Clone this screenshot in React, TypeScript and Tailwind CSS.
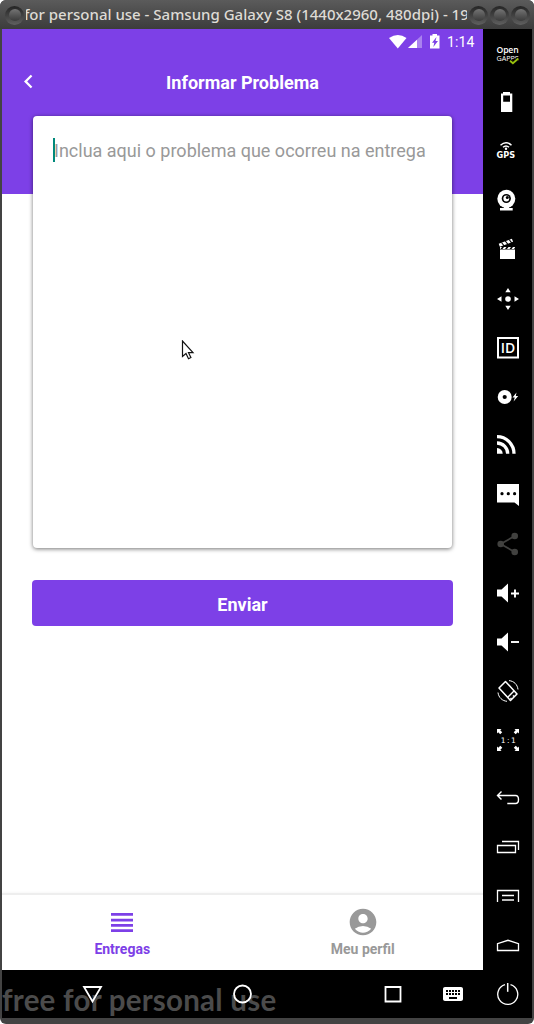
import React from "react";
import { MdAccountCircle, MdChevronLeft, MdKeyboard } from "react-icons/md";

function Cell({ children, label }: { children: React.ReactNode; label: string }) {
  return (
    <button aria-label={label} className="block h-[49px] w-[49px]">
      <svg width="49" height="49" viewBox="0 0 49 49" fill="#fff">
        {children}
      </svg>
    </button>
  );
}

const speaker = <path d="M14 21.5h4.500L25 15.500v19l-6.500-6H14z" />;

function Toolbar() {
  return (
    <aside className="flex w-[49px] shrink-0 flex-col justify-between bg-black">
      <div className="flex flex-col">
        <Cell label="Open GApps">
          <text x="13.600" y="23.600" fontSize="8.600" fontWeight="600" fontFamily="Open Sans, sans-serif" textLength="22">Open</text>
          <text x="13.600" y="32.200" fontSize="7.200" fontWeight="500" fontFamily="Open Sans, sans-serif" textLength="22">GAPPS</text>
          <path d="M27 31.700l2.900 2.600 5.400-4.800" fill="none" stroke="#000" strokeWidth="3.400" />
          <path d="M27 31.700l2.900 2.600 5.400-4.800" fill="none" stroke="#97bf0d" strokeWidth="1.900" />
        </Cell>
        <Cell label="Battery">
          <path fillRule="evenodd" d="M20 14h7v1.500h2.300V34H18V15.500H20zM20.200 17.500v6.300h6.800v-6.300z" />
        </Cell>
        <Cell label="GPS">
          <circle cx="23" cy="21.800" r="1.200" />
          <path d="M20 20.300q3-2.600 6 0M17.500 18.200q5.500-4.800 11 0" fill="none" stroke="#fff" strokeWidth="1.500" />
          <text x="13.600" y="31.400" fontSize="8" fontWeight="700" fontFamily="DejaVu Sans, sans-serif" textLength="18.600" lengthAdjust="spacingAndGlyphs">GPS</text>
        </Cell>
        <Cell label="Camera">
          <circle cx="23.300" cy="22.800" r="9" />
          <circle cx="23.300" cy="22.500" r="4.600" fill="#000" />
          <circle cx="23.300" cy="22.500" r="2.900" />
          <circle cx="24.300" cy="21.500" r="1.500" fill="#000" />
          <path d="M21 31h5v1h3.700v2.500H17V32h4z" />
        </Cell>
        <Cell label="Video">
          <path d="M17 24.500h15V34H17zM17 22h2l-1.500 2H17zM21 22h2.500L22 24h-2.500zM25.500 22H28l-1.500 2H24zM30 22h2v.5L31 24h-2.500z" />
          <path d="M16.300 20.300l13.200-5" stroke="#fff" strokeWidth="3.200" fill="none" />
          <path d="M18.500 17.500l2.600 3.300M22.300 16l2.600 3.300M26.100 14.500l2.600 3.300" stroke="#000" strokeWidth="1.100" />
        </Cell>
        <Cell label="Move">
          <circle cx="25" cy="25" r="2.800" />
          <path d="M25 14l2.700 4.300h-5.400zM25 36l2.700-4.300h-5.400zM14 25l4.500-2.700v5.400zM36 25l-4.500-2.700v5.400z" />
        </Cell>
        <Cell label="Identifiers">
          <rect x="15" y="15" width="20" height="19.500" fill="none" stroke="#fff" strokeWidth="2" />
          <text x="17.800" y="30" fontSize="14" fontWeight="600" fontFamily="Open Sans, sans-serif" textLength="14.500" lengthAdjust="spacingAndGlyphs">ID</text>
        </Cell>
        <Cell label="Disk">
          <circle cx="21.700" cy="25" r="7" />
          <circle cx="21.700" cy="25" r="2.100" fill="#000" />
          <path d="M33.500 20.500l-4 5h2.300l-1.200 4 4.600-5.500h-2.400z" />
        </Cell>
        <Cell label="Network">
          <path d="M14 27a5.700 5.700 0 0 1 5.700 5.700H14z" />
          <path d="M14 22a10.700 10.700 0 0 1 10.700 10.700M14 15.700a17 17 0 0 1 17 17" fill="none" stroke="#fff" strokeWidth="3.300" />
        </Cell>
        <Cell label="Messages">
          <path d="M14 14h22v22l-4.500-3.500H14z" />
          <g fill="#000">
            <circle cx="19" cy="23.700" r="1.600" />
            <circle cx="25.300" cy="23.700" r="1.600" />
            <circle cx="31.600" cy="23.700" r="1.600" />
          </g>
        </Cell>
        <Cell label="Share">
          <path d="M31.700 17l-14 8 14 8" fill="none" stroke="#41413f" strokeWidth="1.800" />
          <g fill="#41413f">
            <circle cx="17.700" cy="25" r="3.300" />
            <circle cx="31.700" cy="17" r="3.300" />
            <circle cx="31.700" cy="33" r="3.300" />
          </g>
        </Cell>
        <Cell label="Volume up">
          {speaker}
          <path d="M28 25.500h8M32 21.500v8" stroke="#fff" strokeWidth="1.900" />
        </Cell>
        <Cell label="Volume down">
          {speaker}
          <path d="M28 25h8" stroke="#fff" strokeWidth="1.900" />
        </Cell>
        <Cell label="Rotate">
          <g fill="none" stroke="#fff">
            <path d="M22.500 15.500L34 28l-6.500 6.500L16 22z" strokeWidth="1.500" strokeLinejoin="round" />
            <path d="M24.500 31.500l6.500-6.500" strokeWidth="1.300" />
            <path d="M26 14.600c5 .5 8.500 4 9 8.900M15 26.500c.5 5 4.500 8.500 9 8.800" strokeWidth="1" />
            <path d="M27.500 32l1 1M30 29.500l1 1" strokeWidth="1.500" />
          </g>
        </Cell>
        <Cell label="Pixel perfect">
          <path d="M14 14h4.500l-1.300 1.300 2 2-2 2-2-2L14 18.500zM36 14v4.500l-1.300-1.300-2 2-2-2 2-2L31.500 14zM14 36v-4.500l1.300 1.300 2-2 2 2-2 2 1.300 1.200zM36 36h-4.500l1.300-1.300-2-2 2-2 2 2 1.200-1.200z" />
          <text x="17.800" y="28" fontSize="7.500" fontFamily="DejaVu Sans, sans-serif" textLength="15">1:1</text>
        </Cell>
      </div>
      <div className="flex flex-col">
        <Cell label="Back">
          <path d="M14.500 22.500h18c4 0 4 8 0 8h-8.200M18.500 18.500l-4 4 4 4" fill="none" stroke="#fff" strokeWidth="1.400" />
        </Cell>
        <Cell label="Recent">
          <path d="M14.500 23.500h18v7h-18zM19 19.500h16.500v8.500" fill="none" stroke="#fff" strokeWidth="1.300" />
        </Cell>
        <Cell label="Menu">
          <path d="M14.500 31V19.500h21V31M19 24.500h12" fill="none" stroke="#fff" strokeWidth="1.300" />
          <path d="M19 29h12" stroke="#bbb" strokeWidth="2" />
        </Cell>
        <Cell label="Home">
          <path d="M14.500 30.500v-6.800L25 20.300l10.500 3.400v6.800z" fill="none" stroke="#fff" strokeWidth="1.300" />
        </Cell>
        <Cell label="Power">
          <path d="M22 15.700a10 10 0 1 0 5.500 0" fill="none" stroke="#fff" strokeWidth="1.300" />
          <path d="M24.700 14v8.800" stroke="#fff" strokeWidth="1.500" />
        </Cell>
      </div>
    </aside>
  );
}

function Knob() {
  return (
    <span className="flex size-[19px] shrink-0 items-center justify-center rounded-full bg-linear-to-b from-[#252525] to-[#606060]">
      <span className="size-[12px] rounded-full bg-linear-to-b from-[#747474] to-[#3b3b3b]" />
    </span>
  );
}

function TitleBar() {
  return (
    <div className="flex h-[29px] shrink-0 items-center rounded-t-[5px] bg-linear-to-b from-[#5b5b5b] to-[#3c3c3c] pt-px pr-[4px] pl-[5px]">
      <Knob />
      <div className="mr-[2px] ml-[2px] flex h-[24px] w-[441px] overflow-hidden">
        <span className="-ml-[2px] shrink-0 font-['Noto_Sans'] text-[15px] leading-[23px] font-medium whitespace-nowrap text-[#dedbd5]">
          for personal use - Samsung Galaxy S8 (1440x2960, 480dpi) - 19
        </span>
      </div>
      <div className="flex gap-[2px]">
        <Knob />
        <Knob />
        <Knob />
      </div>
    </div>
  );
}

function StatusBar() {
  return (
    <div className="flex h-[25px] items-center justify-end pr-[8px] text-white">
      <svg width="51" height="16" viewBox="0 0 51 16" fill="#fff">
        <path d="M0 4Q9 -2 17.500 4L8.800 14.500z" />
        <path d="M33 1v13H19z" opacity="0.35" />
        <path d="M28 5.700V14h-9z" />
        <path fillRule="evenodd" d="M43.500 0h4.500v1.500h2.500v13h-9.500v-13h2.500zM47.500 3l-4.500 5.700h2.300L44.300 13l4.700-6h-2.500z" />
      </svg>
      <span className="ml-[7px] w-[28px] font-[Roboto] text-[14px] leading-4 tracking-[0.1px] whitespace-nowrap">1:14</span>
    </div>
  );
}

function AndroidNav() {
  return (
    <nav className="relative h-[48px] shrink-0 bg-black">
      <span className="absolute top-[12px] left-0 font-[Lato] text-[29.500px] leading-[36px] font-bold tracking-[0.240px] whitespace-nowrap text-[#4b4b4b]">
        free for personal use
      </span>
      <div className="relative flex h-full">
        <svg width="481" height="48" viewBox="0 0 481 48" fill="none" stroke="#fff" strokeWidth="1.800">
          <path d="M82 17h17l-8.500 14.500z" />
          <circle cx="240.500" cy="24" r="8.500" />
          <path d="M383.500 17h15v14.500h-15z" />
        </svg>
        <MdKeyboard className="absolute top-[12px] left-[439px] size-6 text-white" />
      </div>
    </nav>
  );
}

export default function App() {
  return (
    <div className="h-[1024px] w-[534px] bg-white">
      <div className="flex h-full flex-col overflow-hidden rounded-[6px] bg-[#434343]">
        <TitleBar />
        <div className="flex h-[989px] px-[2px]">
          <main className="flex w-[481px] flex-col bg-white font-[Roboto]">
            <header className="h-[165px] shrink-0 bg-[#7d40e7]">
              <StatusBar />
              <div className="grid h-[56px] grid-cols-[52px_1fr_52px] items-center text-white">
                <MdChevronLeft className="mb-[2px] ml-[13px] size-[27px]" />
                <h1 className="pt-px text-center text-[18px] font-bold whitespace-nowrap">Informar Problema</h1>
              </div>
            </header>
            <section className="mx-auto -mt-[78px] flex h-[432px] w-[419px] shrink-0 rounded-[4px] bg-white px-[20px] pt-[22px] shadow-[0_1px_4px_rgba(0,0,0,0.55)]">
              <span className="h-[24px] w-[2px] shrink-0 bg-[#00897b]" />
              <span className="-ml-[1px] text-[18px] leading-[26px] whitespace-nowrap text-[#999]">
                Inclua aqui o problema que ocorreu na entrega
              </span>
            </section>
            <button className="mx-auto mt-[32px] h-[46px] w-[421px] shrink-0 rounded-[4px] bg-[#7d40e7] pt-[2px] text-[18px] font-bold text-white">
              Enviar
            </button>
            <div className="grow" />
            <div className="grid h-[77px] shrink-0 grid-cols-2 border-t-2 border-[#eee] text-center text-[14px] leading-4 font-bold shadow-[0_-1px_2px_rgba(0,0,0,0.03)]">
              <div className="flex flex-col items-center pt-[11px] text-[#7d40e7]">
                <svg width="32" height="32" viewBox="0 0 32 32" fill="currentColor">
                  <path d="M5 7h22v2.700H5zM5 12.700h22v2.700H5zM5 18h22v2.700H5zM5 23.300h22V26H5z" />
                </svg>
                <span className="mt-[3px]">Entregas</span>
              </div>
              <div className="flex flex-col items-center pt-[11px] text-[#999]">
                <MdAccountCircle className="size-[32px]" />
                <span className="mt-[3px]">Meu perfil</span>
              </div>
            </div>
            <AndroidNav />
          </main>
          <Toolbar />
        </div>
      </div>
      <svg className="absolute top-[340px] left-[181px]" width="15" height="21" viewBox="0 0 15 21">
        <path d="M1.500 1v15.500l3.500-3 2.500 5.200 2.400-1.200-2.400-4.800h4.500z" fill="#fff" stroke="#111" strokeWidth="1.200" />
      </svg>
    </div>
  );
}
